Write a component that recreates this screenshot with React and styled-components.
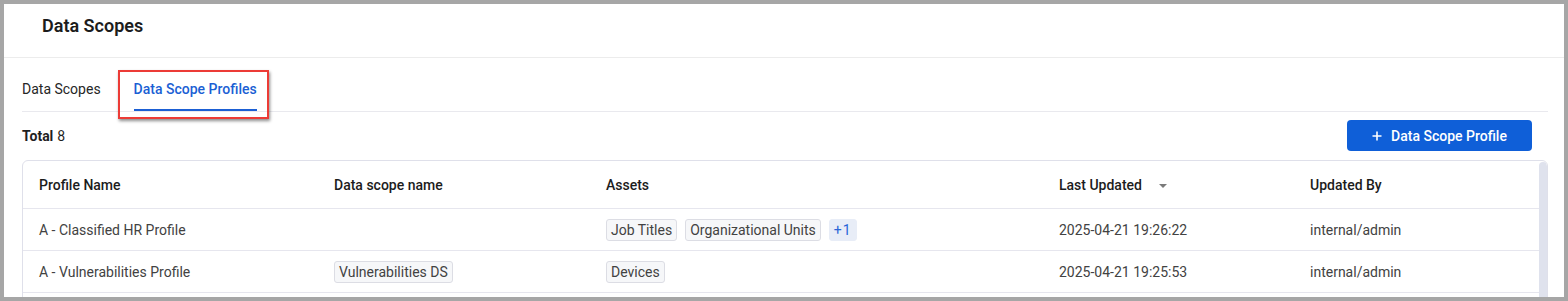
import styled, { createGlobalStyle } from "styled-components";

const GlobalStyle = createGlobalStyle`
  html, body {
    margin: 0;
    padding: 0;
    background: #a6a6a6;
    font-family: Roboto, "Liberation Sans", Arial, sans-serif;
  }
  #root {
    padding: 4px;
    height: 301px;
    box-sizing: border-box;
    overflow: hidden;
  }
`;

const Page = styled.div`
  background: #ffffff;
  height: 293px;
  overflow: hidden;
`;

const Header = styled.header`
  height: 53px;
  display: flex;
  align-items: center;
  padding-left: 38px;
  border-bottom: 1px solid #ececec;
`;

const Title = styled.h1`
  margin: 0;
  font-size: 18px;
  font-weight: 600;
  color: #1c1c1c;
  line-height: 22px;
  padding-bottom: 10px;
`;

const Content = styled.div`
  padding: 0 16px 0 18px;
`;

const TabList = styled.div`
  display: flex;
  gap: 33px;
  border-bottom: 1px solid #e9e9ee;
`;

const Tab = styled.div`
  position: relative;
  padding: 21px 0 10px;
  font-size: 14px;
  line-height: 20px;
  font-weight: ${(p) => (p.$active ? 500 : 400)};
  color: ${(p) => (p.$active ? "#1b5fd4" : "#262626")};
  border-bottom: 2px solid ${(p) => (p.$active ? "#1b5fd4" : "transparent")};
  cursor: pointer;
`;

const Highlight = styled.span`
  position: absolute;
  left: -16px;
  top: 12px;
  width: 151px;
  height: 49px;
  box-sizing: border-box;
  border: 2px solid #ec3b36;
  box-shadow: 1px 2px 3px rgba(0, 0, 0, 0.45);
  pointer-events: none;
`;

const Toolbar = styled.div`
  display: flex;
  align-items: center;
  justify-content: space-between;
  margin-top: 8px;
  padding-right: 16px;
`;

const Total = styled.div`
  font-size: 14px;
  color: #1f1f1f;
  b {
    font-weight: 700;
    margin-right: 4px;
  }
`;

const PrimaryButton = styled.button`
  width: 185px;
  height: 31px;
  display: flex;
  align-items: center;
  justify-content: center;
  gap: 9px;
  border: none;
  border-radius: 4px;
  background: #0f5fd8;
  color: #ffffff;
  font-family: inherit;
  font-size: 14px;
  font-weight: 500;
  cursor: pointer;
`;

const TableCard = styled.div`
  margin-top: 9px;
  border: 1px solid #dfe0ea;
  border-radius: 6px;
  display: flex;
  overflow: hidden;
  height: 160px;
`;

const Table = styled.div`
  flex: 1;
`;

const Scrollbar = styled.div`
  width: 8px;
  margin-top: 1px;
  background: #dfe2ed;
  border-radius: 4px 4px 0 0;
`;

const Row = styled.div`
  display: grid;
  grid-template-columns: 295px 272px 453px 251px 1fr;
  align-items: center;
  height: ${(p) => (p.$head ? "47px" : "41px")};
  border-bottom: 1px solid #e6e6ee;
`;

const Cell = styled.div`
  padding-left: 16px;
  display: flex;
  align-items: center;
  gap: 8px;
  font-size: 14px;
  font-weight: ${(p) => (p.$head ? 500 : 400)};
  color: ${(p) => (p.$head ? "#1c1c1c" : "#424242")};
  white-space: nowrap;
`;

const SortCaret = styled.span`
  margin-left: 9px;
  width: 0;
  height: 0;
  border-left: 4px solid transparent;
  border-right: 4px solid transparent;
  border-top: 4px solid #7a7a7a;
  margin-top: 2px;
`;

const Chip = styled.span`
  display: inline-flex;
  align-items: center;
  height: 22px;
  box-sizing: border-box;
  padding: 0 4px;
  border-radius: 3px;
  font-size: 14px;
  border: 1px solid ${(p) => (p.$more ? "#e8edf7" : "#dcdde4")};
  background: ${(p) => (p.$more ? "#e8edf7" : "#f6f7f9")};
  color: ${(p) => (p.$more ? "#2a66d8" : "#424242")};
  letter-spacing: ${(p) => (p.$more ? "1px" : "0")};
`;

const Plus = () => (
  <svg width="10" height="10" viewBox="0 0 10 10" fill="none">
    <path d="M5 0.5v9M0.5 5h9" stroke="#fff" strokeWidth="1.6" />
  </svg>
);

const rows = [
  {
    name: "A - Classified HR Profile",
    scopes: [],
    assets: ["Job Titles", "Organizational Units"],
    more: 1,
    updated: "2025-04-21 19:26:22",
    by: "internal/admin",
  },
  {
    name: "A - Vulnerabilities Profile",
    scopes: ["Vulnerabilities DS"],
    assets: ["Devices"],
    more: 0,
    updated: "2025-04-21 19:25:53",
    by: "internal/admin",
  },
];

export default function App() {
  return (
    <>
      <GlobalStyle />
      <Page>
        <Header>
          <Title>Data Scopes</Title>
        </Header>
        <Content>
          <TabList>
            <Tab>Data Scopes</Tab>
            <Tab $active>
              Data Scope Profiles
              <Highlight />
            </Tab>
          </TabList>
          <Toolbar>
            <Total>
              <b>Total</b>8
            </Total>
            <PrimaryButton>
              <Plus />
              Data Scope Profile
            </PrimaryButton>
          </Toolbar>
          <TableCard>
            <Table>
              <Row $head>
                <Cell $head>Profile Name</Cell>
                <Cell $head>Data scope name</Cell>
                <Cell $head>Assets</Cell>
                <Cell $head>
                  Last Updated
                  <SortCaret />
                </Cell>
                <Cell $head>Updated By</Cell>
              </Row>
              {rows.map((r) => (
                <Row key={r.name}>
                  <Cell>{r.name}</Cell>
                  <Cell>
                    {r.scopes.map((s) => (
                      <Chip key={s}>{s}</Chip>
                    ))}
                  </Cell>
                  <Cell>
                    {r.assets.map((a) => (
                      <Chip key={a}>{a}</Chip>
                    ))}
                    {r.more > 0 && <Chip $more>+{r.more}</Chip>}
                  </Cell>
                  <Cell>{r.updated}</Cell>
                  <Cell>{r.by}</Cell>
                </Row>
              ))}
              <Row />
            </Table>
            <Scrollbar />
          </TableCard>
        </Content>
      </Page>
    </>
  );
}
